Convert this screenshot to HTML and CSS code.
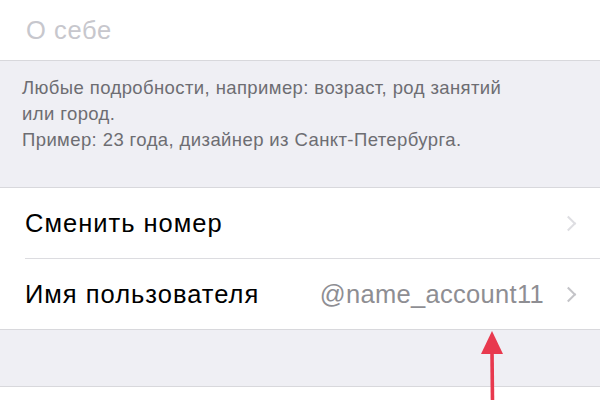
FILE: index.html
```html
<!DOCTYPE html>
<html lang="ru">
<head>
  <meta charset="UTF-8" />
  <meta name="viewport" content="width=device-width, initial-scale=1.0"/>
  <title>Профиль</title>
  <link rel="stylesheet" href="styles.css">
</head>
<body>

<main class="screen">
  <!-- Bio field -->
  <section class="group">
    <div class="bio">О себе</div>
  </section>

  <div class="hint">
    Любые подробности, например: возраст, род занятий<br>
    или город.<br>
    Пример: 23 года, дизайнер из Санкт-Петербурга.
  </div>

  <!-- Account rows -->
  <section class="group">
    <div class="row">
      <span class="label">Сменить номер</span>
      <span class="chevron faded-chevron"></span>
    </div>
    <div class="row">
      <span class="label">Имя пользователя</span>
      <span class="value">@name_account11</span>
      <span class="chevron"></span>
    </div>
  </section>

  <div class="spacer"></div>

  <section class="group tail"></section>

  <!-- Annotation arrow -->
  <svg class="arrow" width="30" height="72" viewBox="0 0 30 72">
    <polygon points="15,0 26,23 4,23" fill="#e8394e"/>
    <line x1="15" y1="20" x2="15.5" y2="72" stroke="#e8394e" stroke-width="3.6"/>
  </svg>
</main>

</body>
</html>
```

FILE: styles.css
```css
/* Base */
body {
  margin: 0;
  font-family: "Liberation Sans", Arial, sans-serif;
  background: #fff;
}

.screen {
  position: relative;
  width: 600px;
  height: 400px;
  overflow: hidden;
  background: #efeff4;
}

.group {
  background: #fff;
}

/* Bio input */
.bio {
  height: 61px;
  box-sizing: border-box;
  padding: 16px 26px 0;
  font-size: 25.5px;
  letter-spacing: 0.6px;
  color: #c7c7cd;
  border-bottom: 1px solid #d8d8dc;
}

.hint {
  height: 127px;
  box-sizing: border-box;
  padding: 14px 22px 0;
  font-size: 18.5px;
  letter-spacing: 0.4px;
  line-height: 26px;
  color: #6d6d72;
  border-bottom: 1px solid #d8d8dc;
}

/* Rows */
.row {
  display: flex;
  align-items: center;
  height: 70px;
  margin-left: 25px;
  padding-right: 22px;
  border-bottom: 1px solid #dcdce0;
}

.row:last-child {
  margin-left: 0;
  padding-left: 25px;
  border-bottom-color: #d8d8dc;
}

.label {
  flex: 1;
  font-size: 25.5px;
  letter-spacing: 1px;
  color: #000;
}

.value {
  font-size: 25.5px;
  letter-spacing: 0.3px;
  color: #8e8e93;
  margin-right: 19px;
}

.chevron {
  width: 9px;
  height: 9px;
  border-top: 2.5px solid #c4c4c8;
  border-right: 2.5px solid #c4c4c8;
  transform: rotate(45deg);
  margin-right: 4px;
}

.faded-chevron {
  border-color: #dedee2;
}

.spacer {
  height: 56px;
  border-bottom: 1px solid #d8d8dc;
}

.tail {
  height: 20px;
}

/* Annotation */
.arrow {
  position: absolute;
  left: 477px;
  top: 331px;
}
```
